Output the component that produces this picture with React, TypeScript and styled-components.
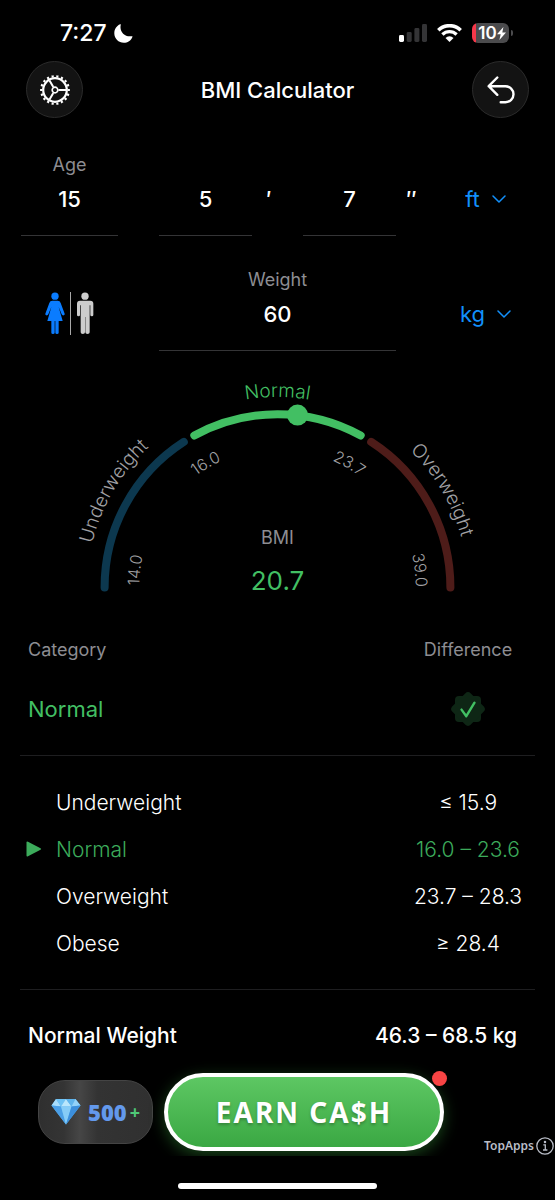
import React from "react";
import styled, { createGlobalStyle } from "styled-components";

const green = "#42bf63";
const blue = "#1290fb";
const grey = "#8d8d92";

const GlobalStyle = createGlobalStyle`
  *, *::before, *::after { box-sizing: border-box; }
  html, body { margin: 0; background: #000; }
  body {
    color: #fff;
    font-family: Inter, "Liberation Sans", sans-serif;
    font-size: 22px;
  }
  button, input, select { font: inherit; color: inherit; }
`;

const Screen = styled.main`
  min-height: 100vh;
  display: flex;
  flex-direction: column;
  background: #000;
`;

/* Status bar */

const StatusBar = styled.div`
  height: 61px;
  padding: 16px 46px 11px 60px;
  display: flex;
  align-items: center;
  justify-content: space-between;
`;

const StatusGroup = styled.div<{ $gap: number }>`
  display: flex;
  align-items: center;
  gap: ${(p) => p.$gap}px;
`;

const Clock = styled.time`
  font-size: 23px;
  font-weight: 500;
`;

const Battery = styled.div`
  position: relative;
  width: 37px;
  height: 20px;
  border-radius: 6px;
  display: flex;
  align-items: center;
  justify-content: center;
  padding-left: 3px;
  background: linear-gradient(90deg, #f5384a 4px, #4b4b4d 4px);
  font-size: 17px;
  font-weight: 600;
  line-height: 20px;

  &::after {
    content: "";
    position: absolute;
    right: -4px;
    top: 7px;
    width: 2px;
    height: 6px;
    border-radius: 0 2px 2px 0;
    background: #4b4b4d;
  }
`;

/* Header */

const Header = styled.header`
  padding: 0 26px;
  display: flex;
  align-items: center;
  justify-content: space-between;
`;

const Title = styled.h1`
  margin: 0;
  font-size: 22px;
  font-weight: 500;
`;

const RoundButton = styled.button`
  width: 57px;
  height: 57px;
  padding: 0;
  border: 1px solid #2b2b2b;
  border-radius: 50%;
  background: #131313;
  display: grid;
  place-items: center;
`;

/* Form */

const Form = styled.form`
  padding: 35px 21px 0;
  display: grid;
  grid-template-columns: 97px 1fr 97px;
  column-gap: 41px;
  row-gap: 32px;
`;

const Field = styled.label`
  display: flex;
  flex-direction: column;
  min-width: 0;
  flex: 1;
`;

const FieldLabel = styled.span`
  height: 24px;
  line-height: 24px;
  font-size: 18px;
  text-align: center;
  color: ${grey};
`;

const FieldInput = styled.input`
  width: 100%;
  height: 59px;
  padding: 0 0 15px;
  border: 0;
  border-bottom: 1px solid #343436;
  border-radius: 0;
  background: transparent;
  text-align: center;
  font-weight: 500;
  outline: none;
`;

const HeightFields = styled.div`
  display: flex;
`;

const Mark = styled.span`
  width: 51px;
  padding: 24px 17px 0 0;
  line-height: 44px;
  text-align: center;
  font-weight: 500;

  &:last-child {
    width: 31px;
    padding-right: 0;
    margin-right: -31px;
  }
`;

const Unit = styled.label`
  padding-top: 24px;
  height: 68px;
  display: flex;
  align-items: center;
  justify-content: center;
  gap: 12px;
  color: ${blue};
`;

const UnitSelect = styled.select`
  appearance: none;
  field-sizing: content;
  padding: 0;
  border: 0;
  background: transparent;
  outline: none;
`;

const GenderGroup = styled.fieldset`
  height: 43px;
  margin: 24px 0 0;
  padding: 0;
  border: 0;
  display: flex;
  justify-content: center;
  gap: 5px;
`;

const GenderOption = styled.label`
  display: flex;
  color: #cdcdcd;

  &:has(input:checked) { color: #0a7cff; }
  input {
    appearance: none;
    width: 0;
    height: 0;
    margin: 0;
  }
`;

const GenderRule = styled.span`
  width: 1px;
  background: #a8a8a8;
`;

/* Gauge */

const Gauge = styled.svg`
  display: block;
  width: 431px;
  max-width: 100%;
  margin: 21px auto 0;
  font-family: inherit;
`;

/* Result tables */

const Section = styled.section`
  margin: 0 20px;
  border-bottom: 1px solid #1e1e20;
`;

const Table = styled.table`
  width: 100%;
  border-collapse: collapse;
  table-layout: fixed;
  font-size: 21px;

  th, td { padding: 0; font-weight: 300; text-align: left; }
  th:last-child, td:last-child { width: 134px; text-align: center; }
`;

const ResultTable = styled(Table)`
  margin: 25px 0 11px;
`;

const RangeTable = styled(Table)`
  margin: 23px 0 22px;

  svg { display: block; }
`;

const HeadCell = styled.th`
  height: 48px;
  font-size: 18px;
  color: ${grey};
  && { font-weight: 400; }
  &&:first-child { padding-left: 8px; }
`;

const ResultCell = styled.td`
  height: 70px;
  font-size: 22px;
  color: ${green};
  && { font-weight: 400; }
  &&:first-child { padding-left: 8px; }
  svg { display: block; margin: 0 auto; }
`;

const RangeRow = styled.tr<{ $active?: boolean }>`
  height: 47px;
  color: ${(p) => (p.$active ? "#3cab5b" : "#fff")};
`;

const RangeName = styled.span`
  display: grid;
  grid-template-columns: 16px 1fr;
  column-gap: 14px;
  align-items: center;
  padding-left: 6px;
`;

const WeightRow = styled.div`
  height: 69px;
  padding: 23px 38px 0 28px;
  display: flex;
  align-items: center;
  justify-content: space-between;
  font-size: 21px;
  font-weight: 500;
`;

/* Promotion */

const Promo = styled.aside`
  height: 97px;
  padding: 14px 0 0 38px;
  overflow: hidden;
  display: flex;
  align-items: flex-start;
  gap: 11px;
`;

const Reward = styled.div`
  width: 115px;
  height: 64px;
  margin-top: 7px;
  border: 1px solid #444;
  border-radius: 27px;
  background: linear-gradient(90deg, #2f2f2f 0%, #343434 22%, #464646 36%, #333 52%, #303030 100%);
  display: flex;
  align-items: center;
  justify-content: center;
  font-family: "Open Sans", sans-serif;
  font-weight: 800;
  color: #6399ec;
  gap: 7px;
`;

const Plus = styled.span`
  margin-left: -4px;
  font-size: 18px;
  font-weight: 700;
  color: #4fc877;
`;

const EarnWrap = styled.div`
  position: relative;
  flex: 0 1 280px;
`;

const EarnButton = styled.button`
  width: 100%;
  height: 78px;
  padding: 0;
  border: 4px solid #fff;
  border-radius: 39px;
  background: linear-gradient(#5dc763, #3aa843);
  box-shadow: 0 4px 15px rgba(60, 175, 65, 0.4);
  color: #fff;
  font-family: "Noto Sans", sans-serif;
  font-size: 28px;
  font-weight: 700;
  letter-spacing: 2px;
  text-shadow: 0 2px 3px rgba(0, 0, 0, 0.25);
`;

const Dot = styled.span`
  position: absolute;
  right: -3px;
  top: -2px;
  width: 15px;
  height: 15px;
  border-radius: 50%;
  background: #f84444;
`;

const AdInfo = styled.a`
  margin-left: auto;
  align-self: flex-end;
  height: 20px;
  padding-right: 1px;
  display: flex;
  align-items: center;
  gap: 2px;
  font-family: "Noto Sans", sans-serif;
  font-size: 12px;
  font-weight: 600;
  color: #b9bdc7;
  text-decoration: none;
`;

const HomeBar = styled.div`
  width: 199px;
  height: 6px;
  margin: 27px auto 11px;
  border-radius: 3px;
  background: #fff;
`;

/* Icons */

const Moon = () => (
  <svg width="19" height="19" viewBox="0 0 19 19" fill="#fff">
    <path d="M6.2 .2Q7 -.1 6.8 .8C5.1 7.3 10.5 13.4 17.8 12.2Q18.8 12 18.4 12.9C17 16.4 13.6 18.8 9.8 18.8C4.6 18.8 .3 14.6 .3 9.3C.3 5.1 2.6 1.6 6.2 .2Z" />
  </svg>
);

const Signal = () => (
  <svg width="28" height="18" viewBox="0 0 28 18" fill="#343436">
    <rect x="0" y="11" width="5" height="7" rx="1.4" fill="#fff" />
    <rect x="7.7" y="8" width="5" height="10" rx="1.4" />
    <rect x="15.4" y="4" width="5" height="14" rx="1.4" />
    <rect x="23" y="0" width="5" height="18" rx="1.4" />
  </svg>
);

const Wifi = () => (
  <svg width="25" height="18" viewBox="0 0 25 18" fill="none" stroke="#fff">
    <path d="M1.3 6.2a16 16 0 0 1 22.4 0" strokeWidth="3.5" />
    <path d="M5.4 10.5a10.2 10.2 0 0 1 14.2 0" strokeWidth="3.3" />
    <path d="M12.5 18L8.5 13.9a5.8 5.8 0 0 1 8 0Z" fill="#fff" stroke="none" />
  </svg>
);

const Bolt = () => (
  <svg width="9" height="13" viewBox="0 0 9 13" fill="#fff">
    <path d="M6.4 0L0 7.2h3.7L2.4 13 9 5.5H5.3Z" />
  </svg>
);

const Gear = () => (
  <svg width="32" height="32" viewBox="-16 -16 32 32" fill="none" stroke="#fff">
    <circle r="13.8" strokeWidth="2.2" pathLength="36" strokeDasharray=".9 1.1" strokeDashoffset=".45" />
    <circle r="11.8" strokeWidth="2.2" />
    <circle r="2.8" strokeWidth="1.7" />
    <path d="M3.4 0H11M-1.7 -2.9L-5.5 -9.5M-1.7 2.9L-5.5 9.5" strokeWidth="2" />
  </svg>
);

const Undo = () => (
  <svg width="28" height="28" viewBox="0 0 28 28" fill="none" stroke="#fff" strokeWidth="2.4" strokeLinecap="round" strokeLinejoin="round">
    <path d="M10.300 1.500L1.700 10.200l8.600 8.600M1.700 10.200h16.800a8 8 0 0 1 0 16h-4.800" />
  </svg>
);

const Chevron = () => (
  <svg width="14" height="8" viewBox="0 0 14 8" fill="none" stroke={blue} strokeWidth="1.5" strokeLinecap="round" strokeLinejoin="round">
    <path d="M1 1l6 6 6-6" />
  </svg>
);

const Woman = () => (
  <svg width="20" height="43" viewBox="138 456 60 129" fill="currentColor">
    <circle cx="168" cy="468.500" r="11" />
    <path d="M160 482h16q7 0 9 7l12 32q1 4-3 5-4 1-6-3l-9-22 12 42h-12v35q0 4-5 4t-5-4v-35h-2v35q0 4-5 4t-5-4v-35h-12l12-42-9 22q-2 4-6 3-4-1-3-5l12-32q2-7 9-7Z" />
  </svg>
);

const Man = () => (
  <svg width="18" height="43" viewBox="227 456 54 129" fill="currentColor">
    <circle cx="254" cy="468.500" r="11" />
    <path d="M238 482h32q9 0 9 9v34q0 4-4.500 4t-4.500-4v-29h-2v81q0 5-6.500 5t-6.500-5v-46h-1v46q0 5-6.500 5t-6.500-5v-81h-2v29q0 4-4.500 4t-4.500-4v-34q0-9 9-9Z" />
  </svg>
);

const Rosette = () => (
  <svg width="36" height="36" viewBox="-18 -18 36 36">
    <g fill="#0e2615">
      <rect x="-13" y="-13" width="26" height="26" rx="4" />
      <rect x="-13" y="-13" width="26" height="26" rx="4" transform="rotate(45)" />
    </g>
    <path d="M-6.500 .6l4.800 6.600L6.500 -6.300" fill="none" stroke={green} strokeWidth="2.4" strokeLinecap="round" strokeLinejoin="round" />
  </svg>
);

const Pointer = () => (
  <svg width="16" height="16" viewBox="0 0 16 16" fill="#3cab5b">
    <path d="M.5 1.500Q.5 0 2 .7L14.500 7.200Q15.800 8 14.500 8.800L2 15.300Q.5 16 .5 14.500Z" />
  </svg>
);

const Diamond = () => (
  <svg width="30" height="27" viewBox="0 0 30 27">
    <path d="M5 1L24.500 1 29.500 7.500 15 26.500 .5 7.500Z" fill="#55b0ee" />
    <path d="M5 1L10 8.500.5 7.500Z" fill="#a8dcfa" />
    <path d="M5 1h10L10 8.500Z" fill="#6fc3f5" />
    <path d="M15 1l5.500 7.500H10Z" fill="#b9e6fc" />
    <path d="M15 1h9.500l-4 7.500Z" fill="#5fb4ec" />
    <path d="M24.500 1l5 6.500-9 1Z" fill="#93d2f8" />
    <path d="M.5 7.500l9.500 1 5 18Z" fill="#4b9fe6" />
    <path d="M10 8.500h10.500L15 26.500Z" fill="#86ccf7" />
    <path d="M20.500 8.500l9-1L15 26.500Z" fill="#3c8fdc" />
  </svg>
);

const Info = () => (
  <svg width="18" height="18" viewBox="0 0 18 18" fill="none" stroke="#b9bdc7" strokeWidth="1.300">
    <circle cx="9" cy="9" r="8.200" />
    <path d="M7.300 7.800h2v5M7 13h4.400" />
    <circle cx="9" cy="5" r=".6" fill="#b9bdc7" />
  </svg>
);

/* The dial is a half circle of radius 173 around (215, 215). */
const BmiGauge = () => (
  <Gauge viewBox="0 0 430 228" role="img" aria-label="BMI 20.7, Normal">
    <defs>
      <path id="outer" d="M25 215a190 190 0 0 1 380 0" />
      <path id="inner" d="M77 215a138 138 0 0 1 276 0" />
    </defs>
    <g fill="none" strokeWidth="8" strokeLinecap="round">
      <path d="M42.500 215A172.500 172.500 0 0 1 121.500 69.700" stroke="#0c384f" />
      <path d="M132 63.300A173 173 0 0 1 298 63.300" stroke={green} />
      <path d="M308.500 69.700A172.500 172.500 0 0 1 387.500 215" stroke="#4e1c19" />
    </g>
    <circle cx="235" cy="43" r="10.500" fill={green} />
    <g fontSize="19" fontWeight="300" fill="#a0a0a4" textAnchor="middle">
      <text><textPath href="#outer" startOffset="16.900%">Underweight</textPath></text>
      <text fill={green}><textPath href="#outer" startOffset="50%">Normal</textPath></text>
      <text><textPath href="#outer" startOffset="83%">Overweight</textPath></text>
    </g>
    <g fontSize="16" fontWeight="300" fill="#a0a0a4" textAnchor="middle">
      <text><textPath href="#inner" startOffset="3.900%">14.0</textPath></text>
      <text><textPath href="#inner" startOffset="33.300%">16.0</textPath></text>
      <text><textPath href="#inner" startOffset="66.700%">23.7</textPath></text>
      <text><textPath href="#inner" startOffset="96.100%">39.0</textPath></text>
    </g>
    <text x="215" y="172" fontSize="18" fill={grey} textAnchor="middle">BMI</text>
    <text x="215" y="218" fontSize="26" fontWeight="400" fill={green} textAnchor="middle">20.7</text>
  </Gauge>
);

const ranges = [
  { name: "Underweight", range: "≤ 15.9" },
  { name: "Normal", range: "16.0 – 23.6", active: true },
  { name: "Overweight", range: "23.7 – 28.3" },
  { name: "Obese", range: "≥ 28.4" },
];

const UnitPicker = ({ label, options }: { label: string; options: string[] }) => (
  <Unit>
    <UnitSelect aria-label={label} defaultValue={options[0]}>
      {options.map((o) => <option key={o}>{o}</option>)}
    </UnitSelect>
    <Chevron />
  </Unit>
);

export default function App() {
  return (
    <Screen>
      <GlobalStyle />
      <StatusBar>
        <StatusGroup $gap={7}>
          <Clock>7:27</Clock>
          <Moon />
        </StatusGroup>
        <StatusGroup $gap={10}>
          <Signal />
          <Wifi />
          <Battery>10<Bolt /></Battery>
        </StatusGroup>
      </StatusBar>

      <Header>
        <RoundButton aria-label="Settings"><Gear /></RoundButton>
        <Title>BMI Calculator</Title>
        <RoundButton aria-label="Back"><Undo /></RoundButton>
      </Header>

      <Form>
        <Field>
          <FieldLabel>Age</FieldLabel>
          <FieldInput defaultValue="15" inputMode="numeric" />
        </Field>
        <HeightFields>
          <Field>
            <FieldLabel />
            <FieldInput aria-label="Feet" defaultValue="5" inputMode="numeric" />
          </Field>
          <Mark>′</Mark>
          <Field>
            <FieldLabel />
            <FieldInput aria-label="Inches" defaultValue="7" inputMode="numeric" />
          </Field>
          <Mark>″</Mark>
        </HeightFields>
        <UnitPicker label="Height unit" options={["ft", "cm"]} />

        <GenderGroup aria-label="Gender">
          <GenderOption>
            <input type="radio" name="gender" aria-label="Female" defaultChecked />
            <Woman />
          </GenderOption>
          <GenderRule />
          <GenderOption>
            <input type="radio" name="gender" aria-label="Male" />
            <Man />
          </GenderOption>
        </GenderGroup>
        <Field>
          <FieldLabel>Weight</FieldLabel>
          <FieldInput defaultValue="60" inputMode="numeric" />
        </Field>
        <UnitPicker label="Weight unit" options={["kg", "lb"]} />
      </Form>

      <BmiGauge />

      <Section>
        <ResultTable>
          <thead>
            <tr>
              <HeadCell>Category</HeadCell>
              <HeadCell>Difference</HeadCell>
            </tr>
          </thead>
          <tbody>
            <tr>
              <ResultCell>Normal</ResultCell>
              <ResultCell><Rosette /></ResultCell>
            </tr>
          </tbody>
        </ResultTable>
      </Section>
      <Section>
        <RangeTable>
          <tbody>
            {ranges.map((r) => (
              <RangeRow key={r.name} $active={r.active}>
                <td>
                  <RangeName>
                    <span>{r.active && <Pointer />}</span>
                    {r.name}
                  </RangeName>
                </td>
                <td>{r.range}</td>
              </RangeRow>
            ))}
          </tbody>
        </RangeTable>
      </Section>
      <WeightRow>
        <span>Normal Weight</span>
        <span>46.3 – 68.5 kg</span>
      </WeightRow>

      <Promo>
        <Reward>
          <Diamond />
          500
          <Plus>+</Plus>
        </Reward>
        <EarnWrap>
          <EarnButton>EARN CA$H</EarnButton>
          <Dot />
        </EarnWrap>
        <AdInfo href="#about-ad">TopApps<Info /></AdInfo>
      </Promo>
      <HomeBar />
    </Screen>
  );
}
